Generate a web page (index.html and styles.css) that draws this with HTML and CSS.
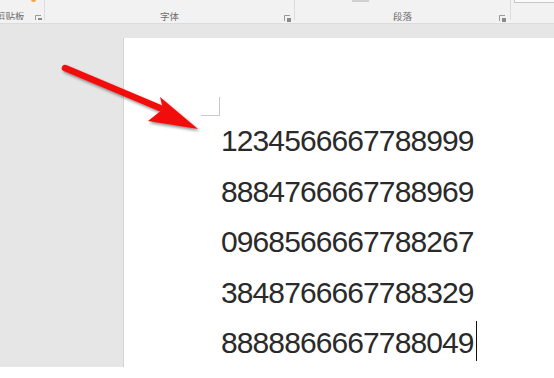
FILE: index.html
```html
<!DOCTYPE html>
<html lang="zh">
<head>
<meta charset="utf-8">
<title>Document</title>
<link rel="stylesheet" href="styles.css">
</head>
<body>
<div class="app">
  <div class="ribbon">
    <div class="group g-clip">
      <span class="orange-dot"></span>
      <span class="label label-clip">剪贴板</span>
      <svg class="launcher" width="7" height="7" viewBox="0 0 7 7"><path d="M0.5 6V0.5H6" fill="none" stroke="#9a9a9a" stroke-width="1"/><rect x="3" y="3" width="4" height="4" fill="#8a8a8a"/></svg>
    </div>
    <div class="group g-font">
      <span class="label">字体</span>
      <svg class="launcher" width="7" height="7" viewBox="0 0 7 7"><path d="M0.5 6V0.5H6" fill="none" stroke="#9a9a9a" stroke-width="1"/><rect x="3" y="3" width="4" height="4" fill="#8a8a8a"/></svg>
    </div>
    <div class="group g-para">
      <span class="gray-bit"></span>
      <span class="label">段落</span>
      <svg class="launcher" width="7" height="7" viewBox="0 0 7 7"><path d="M0.5 6V0.5H6" fill="none" stroke="#9a9a9a" stroke-width="1"/><rect x="3" y="3" width="4" height="4" fill="#8a8a8a"/></svg>
    </div>
    <div class="group g-rest">
      <span class="box-bit"></span>
    </div>
  </div>
  <div class="workspace">
    <div class="side"></div>
    <div class="page">
      <div class="corner"></div>
      <div class="lines">
        <div class="line">1234566667788999</div>
        <div class="line">8884766667788969</div>
        <div class="line">0968566667788267</div>
        <div class="line">3848766667788329</div>
        <div class="line">8888866667788049<span class="cursor"></span></div>
      </div>
    </div>
  </div>
  <div class="status"></div>
  <svg class="arrow" width="554" height="378" viewBox="0 0 554 378">
    <defs>
      <filter id="sh" x="-20%" y="-20%" width="140%" height="140%">
        <feDropShadow dx="1.5" dy="2" stdDeviation="1.6" flood-color="#000" flood-opacity="0.45"/>
      </filter>
    </defs>
    <g filter="url(#sh)" fill="#f20c0c">
      <line x1="65" y1="68" x2="160" y2="108" stroke="#f20c0c" stroke-width="6.5" stroke-linecap="round"/>
      <polygon points="198,129 160,97 163,109 148,121"/>
    </g>
  </svg>
</div>
</body>
</html>
```
FILE: styles.css
```css
html, body {
  margin: 0;
  padding: 0;
}
body {
  width: 554px;
  height: 378px;
  overflow: hidden;
  background: #ffffff;
  font-family: "Liberation Sans", Arial, sans-serif;
}
.app {
  position: relative;
  width: 554px;
  height: 378px;
  display: flex;
  flex-direction: column;
}
.ribbon {
  height: 23px;
  flex: none;
  display: flex;
  background: #f2f2f2;
  border-bottom: 1px solid #dcdcdc;
}
.group {
  position: relative;
  height: 20px;
  display: flex;
  align-items: flex-end;
  justify-content: center;
  border-right: 1px solid #dddddd;
}
.g-clip { width: 44px; overflow: hidden; justify-content: flex-start; }
.g-font { width: 249px; }
.g-para { width: 215px; }
.g-rest { flex: 1; border-right: none; }
.label {
  font-family: "Noto Sans CJK SC", "Noto Sans", sans-serif;
  font-size: 9.5px;
  line-height: 12px;
  color: #6e6e6e;
  margin-bottom: -2px;
}
.label-clip {
  margin-left: -4px;
}
.launcher {
  position: absolute;
  right: 3px;
  bottom: -2px;
}
.g-clip .launcher { right: 2px; }
.g-para .launcher { right: 4px; }
.orange-dot {
  position: absolute;
  left: 31px;
  top: -3px;
  width: 5px;
  height: 5px;
  border-radius: 50%;
  background: #f5a33c;
}
.gray-bit {
  position: absolute;
  left: 57px;
  top: 0;
  width: 17px;
  height: 2px;
  background: #d0d0d0;
}
.box-bit {
  position: absolute;
  left: 3px;
  top: -2px;
  right: -2px;
  height: 3px;
  border: 1px solid #c6c6c6;
  background: #fbfbfb;
}
.workspace {
  height: 329px;
  flex: none;
  display: flex;
  padding-top: 14px;
  background: #e6e6e6;
}
.side {
  width: 123px;
  flex: none;
}
.page {
  flex: 1;
  background: #ffffff;
  border-left: 1px solid #d3d3d3;
  padding-left: 77px;
  padding-top: 59px;
}
.corner {
  width: 18px;
  height: 18px;
  border-right: 1px solid #c9c9c9;
  border-bottom: 1px solid #c9c9c9;
}
.lines {
  padding-left: 20px;
}
.line {
  font-size: 30px;
  line-height: 50.5px;
  letter-spacing: -0.9px;
  color: #2a2a2a;
  white-space: nowrap;
}
.cursor {
  display: inline-block;
  width: 0;
  height: 40px;
  border-left: 1px solid #111111;
  vertical-align: -8px;
  margin-left: 2px;
}
.status {
  flex: 1;
  background: #ffffff;
}
.arrow {
  position: absolute;
  left: 0;
  top: 0;
  pointer-events: none;
}
```
